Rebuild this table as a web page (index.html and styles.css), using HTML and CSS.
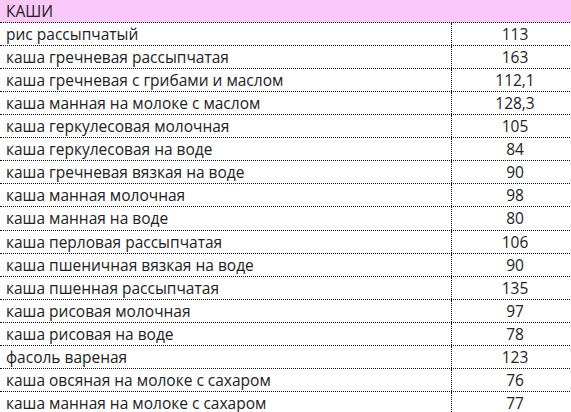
FILE: index.html
```html
<!DOCTYPE html>
<html>
<head>
<meta charset="utf-8">
<link rel="stylesheet" href="styles.css">
</head>
<body>
<div class="table">
  <div class="header">КАШИ</div>
  <div class="row"><div class="name">рис рассыпчатый</div><div class="val">113</div></div>
  <div class="row"><div class="name">каша гречневая рассыпчатая</div><div class="val">163</div></div>
  <div class="row"><div class="name">каша гречневая с грибами и маслом</div><div class="val">112,1</div></div>
  <div class="row"><div class="name">каша манная на молоке с маслом</div><div class="val">128,3</div></div>
  <div class="row"><div class="name">каша геркулесовая молочная</div><div class="val">105</div></div>
  <div class="row"><div class="name">каша геркулесовая на воде</div><div class="val">84</div></div>
  <div class="row"><div class="name">каша гречневая вязкая на воде</div><div class="val">90</div></div>
  <div class="row"><div class="name">каша манная молочная</div><div class="val">98</div></div>
  <div class="row"><div class="name">каша манная на воде</div><div class="val">80</div></div>
  <div class="row"><div class="name">каша перловая рассыпчатая</div><div class="val">106</div></div>
  <div class="row"><div class="name">каша пшеничная вязкая на воде</div><div class="val">90</div></div>
  <div class="row"><div class="name">каша пшенная рассыпчатая</div><div class="val">135</div></div>
  <div class="row"><div class="name">каша рисовая молочная</div><div class="val">97</div></div>
  <div class="row"><div class="name">каша рисовая на воде</div><div class="val">78</div></div>
  <div class="row"><div class="name">фасоль вареная</div><div class="val">123</div></div>
  <div class="row"><div class="name">каша овсяная на молоке с сахаром</div><div class="val">76</div></div>
  <div class="row"><div class="name">каша манная на молоке с сахаром</div><div class="val">77</div></div>
</div>
</body>
</html>
```
FILE: styles.css
```css
html, body {
  margin: 0;
  padding: 0;
  background: #ffffff;
  overflow: hidden;
}
.table {
  width: 578px;
  font-family: "Open Sans", sans-serif;
  font-size: 15.5px;
  color: #222222;
}
.header {
  box-sizing: border-box;
  height: 22.7px;
  background: #f8c8f8;
  border-bottom: 1px dotted #111;
  padding-left: 6px;
  display: flex;
  align-items: center;
}
.row {
  box-sizing: border-box;
  height: 23.1px;
  border-bottom: 1px dotted #111;
  display: grid;
  grid-template-columns: 452px 1fr;
}
.name {
  padding-left: 6px;
  display: flex;
  align-items: center;
  border-right: 1px dotted #111;
  white-space: nowrap;
}
.val {
  display: flex;
  align-items: center;
  justify-content: center;
}
```
